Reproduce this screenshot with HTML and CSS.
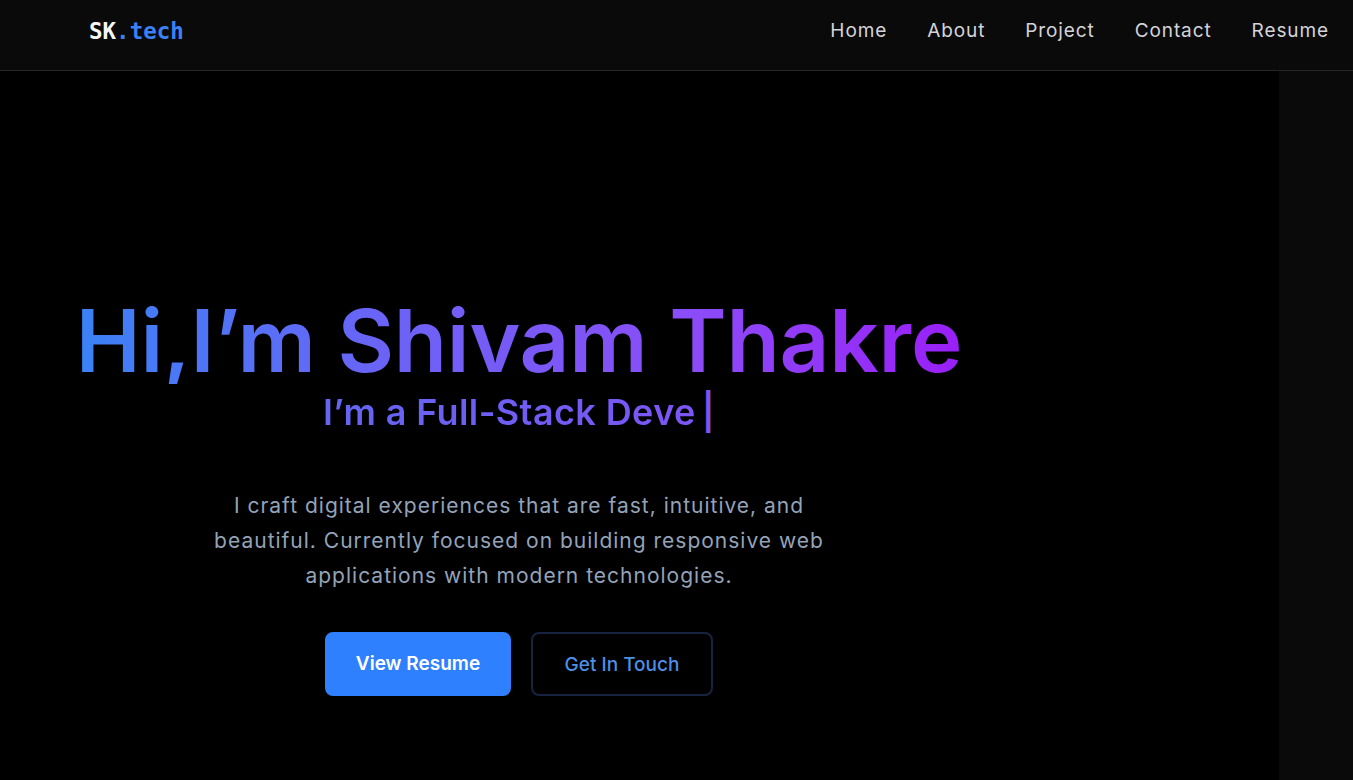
FILE: index.html
```html
<!DOCTYPE html>
<html lang="en">
<head>
<meta charset="utf-8">
<title>SK.tech</title>
<link rel="stylesheet" href="styles.css">
</head>
<body>
<header class="topbar">
  <a class="logo" href="#"><span class="logo-sk">SK</span><span class="logo-tech">.tech</span></a>
  <nav class="nav">
    <a href="#">Home</a>
    <a href="#">About</a>
    <a href="#">Project</a>
    <a href="#">Contact</a>
    <a href="#">Resume</a>
  </nav>
</header>
<main class="page">
  <section class="hero">
    <div class="hero-inner">
      <h1 class="hero-title">Hi,I’m Shivam Thakre</h1>
      <p class="hero-typed"><span class="typed-text">I’m a Full-Stack Deve</span><span class="cursor">|</span></p>
      <p class="hero-desc">I craft digital experiences that are fast, intuitive, and beautiful. Currently focused on building responsive web applications with modern technologies.</p>
      <div class="hero-actions">
        <a class="btn btn-primary" href="#">View Resume</a>
        <a class="btn btn-outline" href="#">Get In Touch</a>
      </div>
    </div>
  </section>
  <aside class="side"></aside>
</main>
</body>
</html>
```
FILE: styles.css
```css
* { box-sizing: border-box; }
html, body { margin: 0; padding: 0; }
body {
  background: #000;
  font-family: "Inter", "Noto Sans", sans-serif;
  color: #d1d5db;
  height: 780px;
  overflow: hidden;
}
a { text-decoration: none; color: inherit; }

.topbar {
  height: 71px;
  background: #0a0a0a;
  border-bottom: 1px solid #262626;
  display: flex;
  align-items: center;
  justify-content: space-between;
  padding: 0 24px 10px 89px;
}
.logo {
  font-family: "DejaVu Sans Mono", "Liberation Mono", monospace;
  font-weight: 700;
  font-size: 22.5px;
  letter-spacing: 0;
  padding-top: 2px;
}
.logo-sk { color: #f5f5f5; }
.logo-tech { color: #3b82f6; }
.nav {
  display: flex;
  gap: 40px;
  font-size: 19px;
  letter-spacing: 0.9px;
  color: #d4d4d8;
}

.page {
  display: flex;
  height: 709px;
}
.hero {
  width: 1279px;
  background: #000;
}
.side {
  flex: 1;
  background: #0a0a0a;
}
.hero-inner {
  width: 1038px;
  text-align: center;
  padding-top: 226px;
}
.hero-title {
  margin: 0;
  font-size: 87px;
  line-height: 1;
  font-weight: 600;
  letter-spacing: -0.2px;
  display: inline-block;
  background: linear-gradient(90deg, #3b82f6 0%, #6b63f6 35%, #8b4cf7 70%, #9a1ff7 100%);
  -webkit-background-clip: text;
  background-clip: text;
  color: transparent;
}
.hero-typed {
  margin: 6px 0 0;
  font-size: 36px;
  font-weight: 600;
  line-height: 44px;
  letter-spacing: 0.4px;
}
.typed-text {
  background: linear-gradient(90deg, #6366f1, #7c55f6);
  -webkit-background-clip: text;
  background-clip: text;
  color: transparent;
}
.cursor {
  color: #7d52f6;
  font-weight: 600;
  margin-left: 6px;
}
.hero-desc {
  width: 620px;
  margin: 54px auto 0;
  font-size: 21px;
  line-height: 35px;
  letter-spacing: 1px;
  color: #94a3b8;
}
.hero-actions {
  display: flex;
  justify-content: center;
  gap: 20px;
  margin-top: 39px;
}
.btn {
  height: 64px;
  display: flex;
  align-items: center;
  justify-content: center;
  border-radius: 8px;
  font-size: 19px;
}
.btn-primary {
  width: 186px;
  background: #2f80ff;
  color: #fff;
  font-weight: 600;
  padding-bottom: 2px;
}
.btn-outline {
  width: 182px;
  border: 2px solid #172341;
  color: #4d8fe6;
  font-weight: 500;
}
```
